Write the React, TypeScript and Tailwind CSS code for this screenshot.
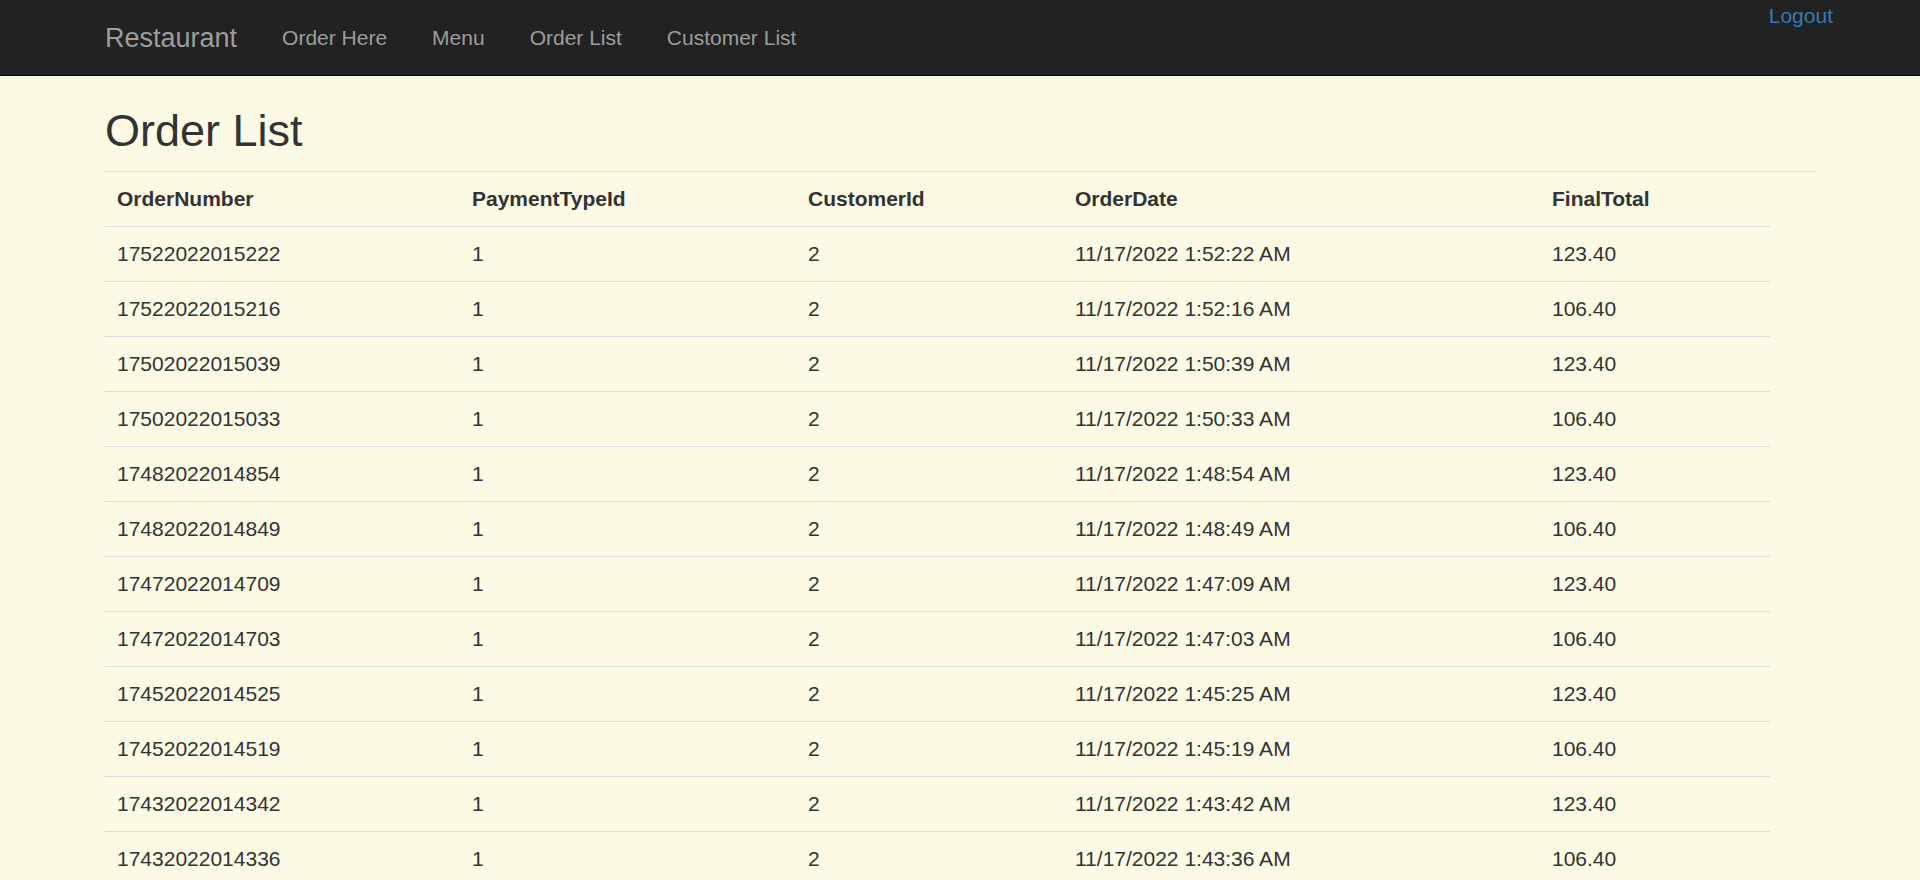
import React from "react";

const rows: [string, string, string, string, string][] = [
  ["17522022015222", "1", "2", "11/17/2022 1:52:22 AM", "123.40"],
  ["17522022015216", "1", "2", "11/17/2022 1:52:16 AM", "106.40"],
  ["17502022015039", "1", "2", "11/17/2022 1:50:39 AM", "123.40"],
  ["17502022015033", "1", "2", "11/17/2022 1:50:33 AM", "106.40"],
  ["17482022014854", "1", "2", "11/17/2022 1:48:54 AM", "123.40"],
  ["17482022014849", "1", "2", "11/17/2022 1:48:49 AM", "106.40"],
  ["17472022014709", "1", "2", "11/17/2022 1:47:09 AM", "123.40"],
  ["17472022014703", "1", "2", "11/17/2022 1:47:03 AM", "106.40"],
  ["17452022014525", "1", "2", "11/17/2022 1:45:25 AM", "123.40"],
  ["17452022014519", "1", "2", "11/17/2022 1:45:19 AM", "106.40"],
  ["17432022014342", "1", "2", "11/17/2022 1:43:42 AM", "123.40"],
  ["17432022014336", "1", "2", "11/17/2022 1:43:36 AM", "106.40"],
];

const navLinks = ["Order Here", "Menu", "Order List", "Customer List"];

export default function App() {
  return (
    <div
      className="h-screen overflow-hidden bg-[#fcf9e4] text-[#333] text-[21px] leading-[30px]"
      style={{ fontFamily: '"Liberation Sans", Arial, Helvetica, sans-serif' }}
    >
      <nav className="h-[76px] bg-[#222] border-b border-[#080808]">
        <div className="mx-auto w-[1755px] px-[22.5px] flex justify-between">
          <div className="flex">
            <a className="-ml-[22.5px] px-[22.5px] py-[22.5px] text-[27px] leading-[30px] text-[#9d9d9d] cursor-pointer">
              Restaurant
            </a>
            <ul className="flex">
              {navLinks.map((l) => (
                <li key={l}>
                  <a className="block px-[22.5px] py-[22.5px] leading-[30px] text-[#9d9d9d] cursor-pointer">
                    {l}
                  </a>
                </li>
              ))}
            </ul>
          </div>
          <a className="self-start mt-[1px] -mr-[18px] text-[#337ab7] leading-[30px] cursor-pointer">Logout</a>
        </div>
      </nav>
      <div className="mx-auto w-[1755px] px-[22.5px]">
        <h2 className="mt-[30px] mb-[15px] text-[45px] leading-[50px] font-normal">Order List</h2>
        <div className="border-t border-[#ddd]">
          <table className="table-fixed w-[1665px] border-collapse">
            <colgroup>
              <col className="w-[355px]" />
              <col className="w-[336px]" />
              <col className="w-[267px]" />
              <col className="w-[477px]" />
              <col className="w-[230px]" />
            </colgroup>
            <thead>
              <tr>
                {["OrderNumber", "PaymentTypeId", "CustomerId", "OrderDate", "FinalTotal"].map((h) => (
                  <th key={h} className="text-left font-bold px-[12px] py-[12px] leading-[30px]">
                    {h}
                  </th>
                ))}
              </tr>
            </thead>
            <tbody>
              {rows.map((r) => (
                <tr key={r[0] + r[3]}>
                  {r.map((c, i) => (
                    <td key={i} className="border-t border-[#ddd] px-[12px] py-[12px] leading-[30px]">
                      {c}
                    </td>
                  ))}
                </tr>
              ))}
            </tbody>
          </table>
        </div>
      </div>
    </div>
  );
}
